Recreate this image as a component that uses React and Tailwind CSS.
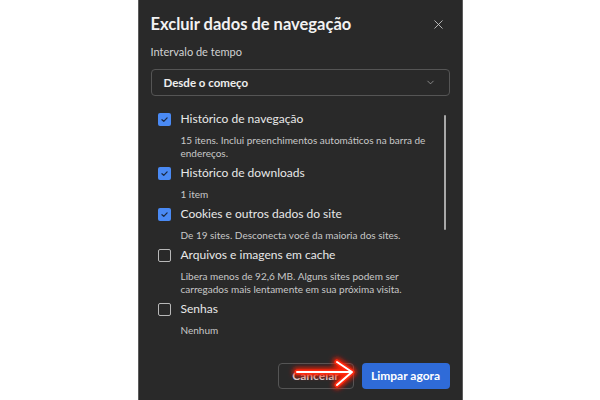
import { ChevronDown, X } from "lucide-react";

const items = [
  {
    label: "Histórico de navegação",
    desc: ["15 itens. Inclui preenchimentos automáticos na barra de", "endereços."],
    checked: true,
  },
  { label: "Histórico de downloads", desc: ["1 item"], checked: true },
  {
    label: "Cookies e outros dados do site",
    desc: ["De 19 sites. Desconecta você da maioria dos sites."],
    checked: true,
  },
  {
    label: "Arquivos e imagens em cache",
    desc: ["Libera menos de 92,6 MB. Alguns sites podem ser", "carregados mais lentamente em sua próxima visita."],
    checked: false,
  },
  { label: "Senhas", desc: ["Nenhum"], checked: false },
];

function Checkbox({ checked }) {
  if (checked) {
    return (
      <div className="flex h-[13px] w-[13px] shrink-0 items-center justify-center rounded-[2px] bg-[#4a8af4]">
        <svg width="9" height="9" viewBox="0 0 10 10" fill="none">
          <path d="M2.2 5.2 L4.2 7.1 L7.9 3.2" stroke="#1b2a44" strokeWidth="1.4" strokeLinecap="round" strokeLinejoin="round" />
        </svg>
      </div>
    );
  }
  return <div className="h-[13px] w-[13px] shrink-0 rounded-[2px] border border-[#b8b8b8]" />;
}

export default function App() {
  return (
    <div className="flex h-[400px] w-[600px] justify-center overflow-hidden bg-white font-['Lato',sans-serif]">
      <div className="relative flex h-[400px] w-[325px] flex-col border-x border-[#5c5c5c] bg-[#292929] px-[12px] pt-[12px]">
        <div className="flex items-center justify-between">
          <h1 className="text-[16.5px] font-bold leading-[24px] text-[#f2f2f2]">
            Excluir dados de navegação
          </h1>
          <X size={15} strokeWidth={1.4} className="mr-[4px] text-[#c8c8c8]" />
        </div>

        <div className="mt-[7px] text-[11px] leading-[18px] text-[#d2d2d2]">Intervalo de tempo</div>

        <div className="mt-[8px] flex h-[27px] items-center justify-between rounded-[4px] border border-[#555] pl-[12px] pr-[13px]">
          <span className="text-[11.5px] font-bold text-[#eeeeee]">Desde o começo</span>
          <ChevronDown size={11} strokeWidth={1.5} className="text-[#b0b0b0]" />
        </div>

        <div className="mt-[13px] flex">
          <div className="flex flex-1 flex-col gap-[3px] pl-[7px]">
            {items.map((item) => (
              <div key={item.label} className="flex flex-col">
                <div className="flex h-[20px] items-center gap-[10px]">
                  <Checkbox checked={item.checked} />
                  <span className="text-[12px] text-[#e8e8e8]">{item.label}</span>
                </div>
                <div className="mt-[5px] pl-[23px] text-[10px] leading-[13px] text-[#c8c8c8]">
                  {item.desc.map((line) => (
                    <div key={line}>{line}</div>
                  ))}
                </div>
              </div>
            ))}
          </div>
          <div className="ml-[4px] mr-[4px] w-[2px]">
            <div className="mt-[6px] h-[115px] w-[2px] rounded-full bg-[#a8a8a8]" />
          </div>
        </div>

        <div className="mt-auto mb-[11px] flex justify-end gap-[8px]">
          <button className="h-[26px] w-[76px] rounded-[4px] border border-[#555] text-[12px] font-bold text-[#d8d8d8]">
            Cancelar
          </button>
          <button className="h-[26px] w-[88px] rounded-[4px] bg-[#2f6bd8] text-[12px] font-bold text-white">
            Limpar agora
          </button>
        </div>

        <svg
          className="pointer-events-none absolute left-[148px] top-[352px]"
          width="80"
          height="44"
          viewBox="0 0 80 44"
          fill="none"
        >
          <defs>
            <filter id="glow" x="-30%" y="-60%" width="160%" height="220%">
              <feGaussianBlur stdDeviation="2.5" />
            </filter>
          </defs>
          <g strokeLinecap="round" strokeLinejoin="round">
            <path d="M10 20 H64 M50 10 L65 20 L50 33" stroke="#ff1a00" strokeWidth="8" filter="url(#glow)" />
            <path d="M10 20 H64 M50 10 L65 20 L50 33" stroke="#ff2a10" strokeWidth="5" />
            <path d="M10 20 H64 M50 10 L65 20 L50 33" stroke="#ffffff" strokeWidth="2" />
          </g>
        </svg>
      </div>
    </div>
  );
}
